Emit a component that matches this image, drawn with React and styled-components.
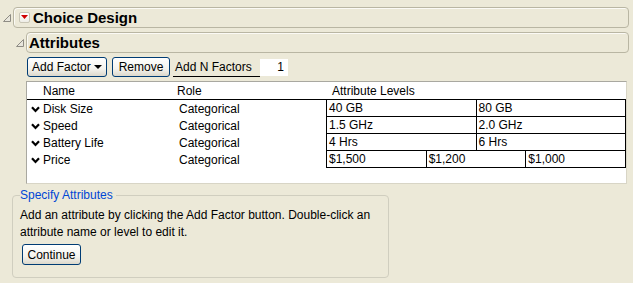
import React from 'react';
import styled, { createGlobalStyle } from 'styled-components';

const GlobalStyle = createGlobalStyle`
  body {
    margin: 0;
    background: #ece9d8;
    font-family: "Liberation Sans", Arial, sans-serif;
    font-size: 12px;
    color: #000;
  }
`;

const PageStyled = styled.div`
  box-sizing: border-box;
  width: 633px;
  height: 283px;
  padding: 7px 4px 0 3px;
  overflow: hidden;
`;

const OutlineRowStyled = styled.div`
  display: flex;
  align-items: center;
  padding-left: ${(p) => p.indent || 0}px;
  margin-top: ${(p) => p.gap || 0}px;
`;

const DisclosureStyled = styled.svg`
  flex: none;
  width: 8px;
  height: 8px;
  margin-right: 2px;
`;

const HeaderBoxStyled = styled.div`
  flex: 1;
  box-sizing: border-box;
  height: 21px;
  display: flex;
  align-items: center;
  padding-left: ${(p) => p.pad}px;
  border: 1px solid #b9b6a3;
  border-radius: 4px;
  box-shadow: inset 1px 1px 0 #fbfaf5;
  font-size: 15px;
  font-weight: 700;
  color: #000;
`;

const RedMenuStyled = styled.span`
  flex: none;
  box-sizing: border-box;
  width: 11px;
  height: 11px;
  margin-right: 3px;
  display: flex;
  align-items: center;
  justify-content: center;
  border: 1px solid #c9c6b6;
  border-radius: 2px;
  background: linear-gradient(#ffffff, #eeede6);
`;

const ToolbarStyled = styled.div`
  display: flex;
  align-items: center;
  margin-top: 4px;
  padding-left: 24px;
  height: 20px;
`;

const ButtonStyled = styled.button`
  box-sizing: border-box;
  height: ${(p) => p.h || 20}px;
  width: ${(p) => p.w}px;
  margin-left: ${(p) => p.ml || 0}px;
  margin-top: ${(p) => p.mt || 0}px;
  padding: 0 4px;
  display: flex;
  align-items: center;
  justify-content: ${(p) => (p.menu ? 'space-between' : 'center')};
  border: 1px solid #003c74;
  border-radius: 3px;
  background: linear-gradient(#ffffff 0%, #f4f3ee 60%, #dcd8cb 100%);
  font-family: "Liberation Sans", Arial, sans-serif;
  font-size: 12px;
  color: #000;
`;

const LabelStyled = styled.span`
  box-sizing: border-box;
  width: 87px;
  height: 19px;
  margin-left: 3px;
  padding-left: 2px;
  display: flex;
  align-items: flex-end;
  padding-bottom: 2px;
  border-bottom: 1px solid #000;
`;

const NumberBoxStyled = styled.span`
  box-sizing: border-box;
  width: 28px;
  height: 17px;
  padding-right: 4px;
  display: flex;
  align-items: center;
  justify-content: flex-end;
  background: #fff;
`;

const TableBoxStyled = styled.div`
  box-sizing: border-box;
  width: 601px;
  height: 103px;
  margin: 4px 0 0 23px;
  background: #fff;
  border-top: 1px solid #a9a8a0;
  border-left: 1px solid #a9a8a0;
  border-right: 1px solid #d8d5c6;
  border-bottom: 1px solid #d8d5c6;
`;

const RowStyled = styled.div`
  display: grid;
  grid-template-columns: 150px 149px 300px;
  height: 17px;
  line-height: 16px;
  ${(p) => p.head && 'border-bottom: 1px solid #000;'}
`;

const NameCellStyled = styled.div`
  display: flex;
  align-items: center;
  padding-left: ${(p) => (p.head ? 16 : 4)}px;
  padding-top: 1px;
`;

const RoleCellStyled = styled.div`
  padding-left: ${(p) => (p.head ? 0 : 2)}px;
  padding-top: 1px;
`;

const LevelsHeadStyled = styled.div`
  padding-left: 6px;
  padding-top: 1px;
`;

const LevelsStyled = styled.div`
  display: flex;
  border-left: 1px solid #000;
`;

const LevelCellStyled = styled.div`
  flex: 1;
  min-width: 0;
  padding-left: 2px;
  border-right: 1px solid #000;
  border-bottom: 1px solid #000;
  height: 16px;
  line-height: 17px;
`;

const ChevronStyled = styled.svg`
  flex: none;
  width: 9px;
  height: 7px;
  margin-right: 3px;
`;

const FieldsetStyled = styled.fieldset`
  box-sizing: border-box;
  width: 377px;
  height: 90px;
  margin: 4px 0 0 9px;
  padding: 2px 7px 0 7px;
  border: 1px solid #d0cebf;
  border-radius: 4px;
`;

const LegendStyled = styled.legend`
  padding: 0 3px 0 0;
  color: #0046d5;
  font-size: 12px;
  line-height: 14px;
`;

const HelpStyled = styled.p`
  margin: 3px 0 0 0;
  line-height: 17px;
`;

const Disclosure = () => (
  <DisclosureStyled viewBox="0 0 8 8">
    <polygon points="7.5,0.5 7.5,7.5 0.5,7.5" fill="#e8e6dc" stroke="#8e8c84" strokeWidth="1" />
  </DisclosureStyled>
);

const Chevron = () => (
  <ChevronStyled viewBox="0 0 9 7">
    <polyline points="1,1.2 4.5,5 8,1.2" fill="none" stroke="#000" strokeWidth="2.2" />
  </ChevronStyled>
);

const attributes = [
  { name: 'Disk Size', levels: ['40 GB', '80 GB'] },
  { name: 'Speed', levels: ['1.5 GHz', '2.0 GHz'] },
  { name: 'Battery Life', levels: ['4 Hrs', '6 Hrs'] },
  { name: 'Price', levels: ['$1,500', '$1,200', '$1,000'] },
];

const App = () => (
  <PageStyled>
    <GlobalStyle />
    <OutlineRowStyled>
      <Disclosure />
      <HeaderBoxStyled pad={5}>
        <RedMenuStyled>
          <svg width="7" height="5" viewBox="0 0 7 5">
            <polygon points="0,0 7,0 3.5,4" fill="#d00000" />
          </svg>
        </RedMenuStyled>
        Choice Design
      </HeaderBoxStyled>
    </OutlineRowStyled>

    <OutlineRowStyled indent={13} gap={4}>
      <Disclosure />
      <HeaderBoxStyled pad={2}>Attributes</HeaderBoxStyled>
    </OutlineRowStyled>

    <ToolbarStyled>
      <ButtonStyled w={80} menu>
        Add Factor
        <svg width="8" height="5" viewBox="0 0 8 5">
          <polygon points="0,0 8,0 4,4" fill="#000" />
        </svg>
      </ButtonStyled>
      <ButtonStyled w={58} ml={5}>Remove</ButtonStyled>
      <LabelStyled>Add N Factors</LabelStyled>
      <NumberBoxStyled>1</NumberBoxStyled>
    </ToolbarStyled>

    <TableBoxStyled>
      <RowStyled head>
        <NameCellStyled head>Name</NameCellStyled>
        <RoleCellStyled head>Role</RoleCellStyled>
        <LevelsHeadStyled>Attribute Levels</LevelsHeadStyled>
      </RowStyled>
      {attributes.map((a) => (
        <RowStyled key={a.name}>
          <NameCellStyled>
            <Chevron />
            {a.name}
          </NameCellStyled>
          <RoleCellStyled>Categorical</RoleCellStyled>
          <LevelsStyled>
            {a.levels.map((l) => (
              <LevelCellStyled key={l}>{l}</LevelCellStyled>
            ))}
          </LevelsStyled>
        </RowStyled>
      ))}
    </TableBoxStyled>

    <FieldsetStyled>
      <LegendStyled>Specify Attributes</LegendStyled>
      <HelpStyled>
        Add an attribute by clicking the Add Factor button. Double-click an attribute name or level
        to edit it.
      </HelpStyled>
      <ButtonStyled w={59} h={21} ml={2} mt={3}>
        Continue
      </ButtonStyled>
    </FieldsetStyled>
  </PageStyled>
);

export default App;
